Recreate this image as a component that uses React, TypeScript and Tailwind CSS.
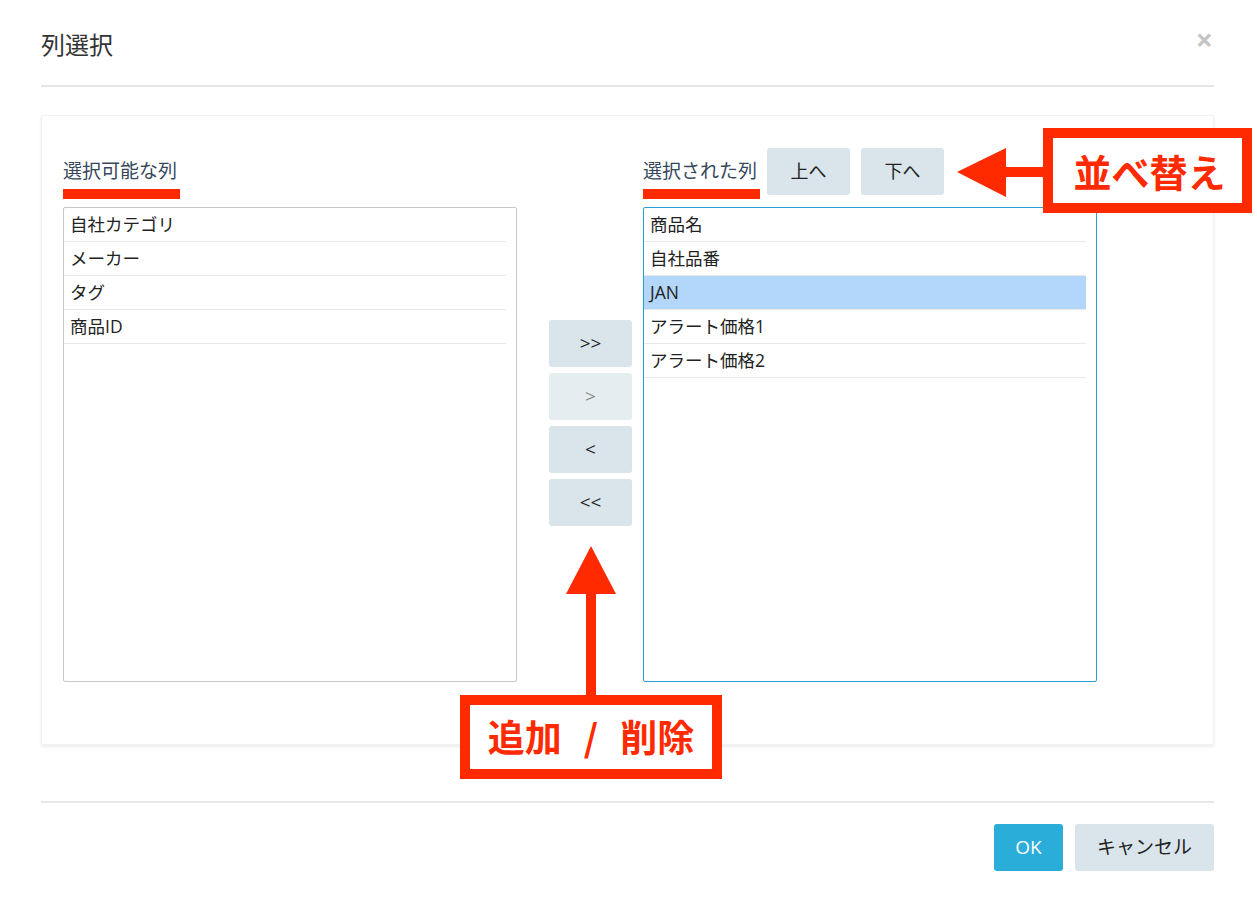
import React from 'react'

const font = { fontFamily: '"Open Sans", "Noto Sans CJK JP", sans-serif' }
const jpBold = { fontFamily: '"Noto Sans CJK JP", sans-serif' }

const available = ['自社カテゴリ', 'メーカー', 'タグ', '商品ID']
const selected = ['商品名', '自社品番', 'JAN', 'アラート価格1', 'アラート価格2']

function ListBox({ items, active, focused }: { items: string[]; active?: number; focused?: boolean }) {
  return (
    <div
      className={
        'h-[475px] w-[454px] rounded-[2px] border bg-white ' +
        (focused ? 'border-[#2a9fd6]' : 'border-[#c8c8c8]')
      }
    >
      <ul className="mr-[10px]">
        {items.map((item, i) => (
          <li
            key={item}
            className={
              'flex h-[34px] items-center border-b border-[#e8e8e8] pl-[6px] text-[17.5px] text-[#222] ' +
              (i === active ? 'bg-[#b3d7fa]' : '')
            }
          >
            {item}
          </li>
        ))}
      </ul>
    </div>
  )
}

function MoveButton({ label, disabled }: { label: string; disabled?: boolean }) {
  return (
    <button
      className={
        'flex h-[47px] w-[83px] items-center justify-center rounded-[3px] text-[19px] ' +
        (disabled ? 'bg-[#e5edf0] text-[#888]' : 'bg-[#d9e5eb] text-[#222]')
      }
    >
      {label}
    </button>
  )
}

export default function App() {
  return (
    <div className="relative h-[912px] w-[1257px] overflow-hidden bg-white" style={font}>
      <div className="mx-[41px] w-[1173px]">
        {/* header */}
        <div className="flex h-[87px] items-start justify-between border-b-2 border-[#e6e6e6] pt-[28px]">
          <h1 className="text-[24px] font-normal leading-[34px] text-[#333]">列選択</h1>
          <span className="mr-[1px] mt-[-5px] text-[30px] font-bold leading-[34px] text-[#c4c4c4]">×</span>
        </div>

        {/* panel */}
        <div className="mt-[28px] flex h-[630px] border border-[#f2f2f2] pl-[21px] pt-[32px] shadow-[0_2px_3px_rgba(0,0,0,0.08)]">
          <div className="flex flex-col">
            <div className="flex h-[47px] items-center">
              <span className="text-[19px] text-[#34475c]">選択可能な列</span>
            </div>
            <div className="mt-[12px]">
              <ListBox items={available} />
            </div>
          </div>

          <div className="ml-[32px] flex flex-col gap-[6px] pt-[172px]">
            <MoveButton label=">>" />
            <MoveButton label=">" disabled />
            <MoveButton label="<" />
            <MoveButton label="<<" />
          </div>

          <div className="ml-[11px] flex flex-col">
            <div className="flex h-[47px] items-center">
              <span className="text-[19px] text-[#34475c]">選択された列</span>
              <button className="ml-[10px] h-[47px] w-[83px] rounded-[3px] bg-[#d9e5eb] text-[18px] text-[#222]">
                上へ
              </button>
              <button className="ml-[11px] h-[47px] w-[83px] rounded-[3px] bg-[#d9e5eb] text-[18px] text-[#222]">
                下へ
              </button>
            </div>
            <div className="mt-[12px]">
              <ListBox items={selected} active={2} focused />
            </div>
          </div>
        </div>

        {/* footer */}
        <div className="mt-[56px] flex justify-end gap-[12px] border-t-2 border-[#e8e8e8] pt-[21px]">
          <button className="h-[47px] w-[69px] rounded-[3px] bg-[#2aaed9] text-[19px] text-white">OK</button>
          <button className="h-[47px] w-[139px] rounded-[3px] bg-[#d9e5eb] text-[19px] text-[#222]">キャンセル</button>
        </div>
      </div>

      {/* annotations */}
      <div className="absolute left-[63px] top-[189px] h-[10px] w-[117px] bg-[#ff2a00]" />
      <div className="absolute left-[643px] top-[189px] h-[10px] w-[117px] bg-[#ff2a00]" />

      <svg className="absolute left-[956px] top-[146px]" width="90" height="54" viewBox="0 0 90 54">
        <polygon points="1,26 50,2 50,51" fill="#ff2a00" />
        <rect x="49" y="21" width="41" height="10" fill="#ff2a00" />
      </svg>
      <div
        className="absolute left-[1043px] top-[128px] flex h-[85px] w-[209px] items-center justify-center border-[10px] border-[#ff2a00] bg-white pl-[4px] text-[38px] font-bold text-[#ff2a00]"
        style={jpBold}
      >
        並べ替え
      </div>

      <svg className="absolute left-[565px] top-[545px]" width="52" height="152" viewBox="0 0 52 152">
        <polygon points="26,1 1,49 51,49" fill="#ff2a00" />
        <rect x="21" y="48" width="10" height="104" fill="#ff2a00" />
      </svg>
      <div
        className="absolute left-[460px] top-[695px] flex h-[84px] w-[262px] items-center justify-center border-[10px] border-[#ff2a00] bg-white text-[37px] font-bold text-[#ff2a00]"
        style={jpBold}
      >
        <span>追加</span>
        <span className="mx-[22px]">/</span>
        <span>削除</span>
      </div>
    </div>
  )
}
